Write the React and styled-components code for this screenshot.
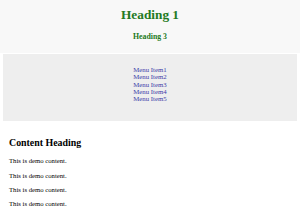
import React from "react";
import styled, { createGlobalStyle } from "styled-components";

const Global = createGlobalStyle`
  html, body { margin: 0; padding: 0; background: #ffffff; }
  body { font-family: "Liberation Serif", "Times New Roman", serif; color: #000; }
`;

const Header = styled.header`
  background: #f8f8f8;
  height: 53px;
  box-sizing: border-box;
  padding-top: 7px;
  text-align: center;
`;

const Title = styled.h1`
  margin: 0;
  font-size: 13.3px;
  line-height: 15.3px;
  font-weight: bold;
  color: #237a23;
`;

const Subtitle = styled.h3`
  margin: 10px 0 0;
  font-size: 7.8px;
  line-height: 9px;
  font-weight: bold;
  color: #237a23;
`;

const Main = styled.div`
  margin: 1px 3px 0;
`;

const Menu = styled.nav`
  background: #eeeeee;
  height: 67px;
  box-sizing: border-box;
  padding-top: 12px;
  display: flex;
  flex-direction: column;
  align-items: center;
`;

const MenuItem = styled.a`
  font-size: 6.8px;
  line-height: 7.3px;
  color: #3c3ca8;
  text-decoration: none;
`;

const Content = styled.section`
  padding: 16px 6px 0;
`;

const ContentHeading = styled.h2`
  margin: 0 0 9px;
  font-size: 9.9px;
  line-height: 11.3px;
  font-weight: bold;
  color: #000;
`;

const Para = styled.p`
  margin: 0 0 6.7px;
  font-size: 6.7px;
  line-height: 7.6px;
  color: #000;
`;

export default function App() {
  return (
    <>
      <Global />
      <Header>
        <Title>Heading 1</Title>
        <Subtitle>Heading 3</Subtitle>
      </Header>
      <Main>
        <Menu>
          {[1, 2, 3, 4, 5].map((n) => (
            <MenuItem key={n} href="#">Menu Item{n}</MenuItem>
          ))}
        </Menu>
        <Content>
          <ContentHeading>Content Heading</ContentHeading>
          {[0, 1, 2, 3].map((i) => (
            <Para key={i}>This is demo content.</Para>
          ))}
        </Content>
      </Main>
    </>
  );
}
